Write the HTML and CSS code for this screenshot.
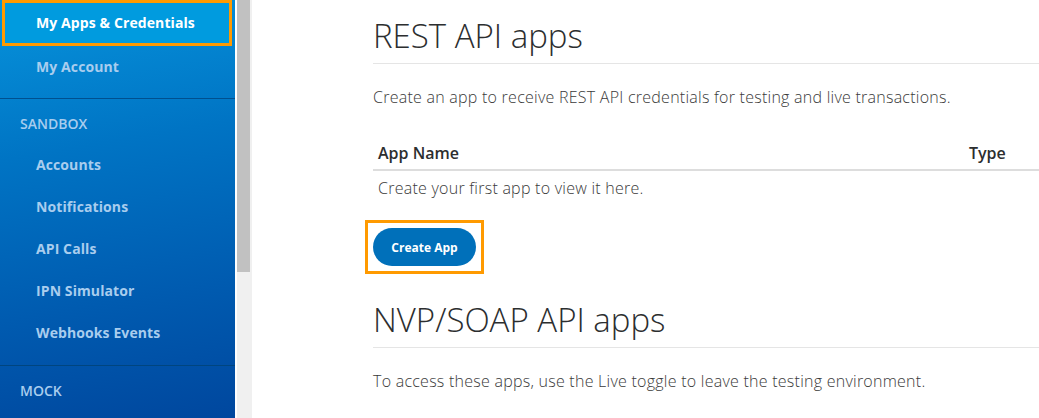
FILE: index.html
```html
<!DOCTYPE html>
<html>
<head>
<meta charset="utf-8">
<link rel="stylesheet" href="styles.css">
</head>
<body>
<div class="page">
  <aside class="sidebar">
    <nav class="nav">
      <a class="item active">My Apps &amp; Credentials</a>
      <a class="item">My Account</a>
    </nav>
    <div class="group">
      <div class="group-title">SANDBOX</div>
      <a class="item">Accounts</a>
      <a class="item">Notifications</a>
      <a class="item">API Calls</a>
      <a class="item">IPN Simulator</a>
      <a class="item">Webhooks Events</a>
    </div>
    <div class="group last">
      <div class="group-title">MOCK</div>
    </div>
  </aside>
  <div class="scrollbar"><div class="thumb"></div></div>
  <main class="main">
    <section class="section">
      <h2 class="title">REST API apps</h2>
      <p class="desc">Create an app to receive REST API credentials for testing and live transactions.</p>
      <table class="apps">
        <thead>
          <tr><th class="name">App Name</th><th class="type">Type</th></tr>
        </thead>
        <tbody>
          <tr><td colspan="2">Create your first app to view it here.</td></tr>
        </tbody>
      </table>
      <div class="highlight"><button class="btn">Create App</button></div>
    </section>
    <section class="section second">
      <h2 class="title">NVP/SOAP API apps</h2>
      <p class="desc">To access these apps, use the Live toggle to leave the testing environment.</p>
    </section>
  </main>
</div>
</body>
</html>
```

FILE: styles.css
```css
html, body {
  margin: 0;
  padding: 0;
  height: 100%;
  overflow: hidden;
  background: #ffffff;
}
body {
  font-family: "Open Sans", "Noto Sans", sans-serif;
}
.page {
  display: flex;
  height: 418px;
  width: 1039px;
  overflow: hidden;
}
.sidebar {
  width: 235px;
  flex: 0 0 235px;
  background: linear-gradient(170deg, #0794dc 0%, #0074c4 35%, #005bb0 70%, #00479e 100%);
  font-size: 14px;
  font-weight: 700;
  font-stretch: 88%;
}
.nav {
  padding-bottom: 10px;
  border-bottom: 1px solid #00508f;
}
.item {
  display: block;
  height: 42px;
  line-height: 42px;
  padding-left: 36px;
  color: #a9cdee;
  text-decoration: none;
  letter-spacing: 0.1px;
}
.item.active {
  height: 40px;
  line-height: 40px;
  margin: 0 3px 0 2px;
  padding-left: 31px;
  border: 3px solid #ff9a00;
  background: #009bdf;
  color: #ffffff;
}
.group {
  padding-bottom: 11px;
  border-bottom: 1px solid #00457f;
}
.group.last {
  border-bottom: 0;
}
.group-title {
  padding: 15px 0 10px 20px;
  line-height: 20px;
  color: #a9cdee;
  font-weight: 600;
  font-size: 14px;
}
.scrollbar {
  flex: 0 0 15px;
  margin-left: 2px;
  background: #f0f0f0;
}
.thumb {
  width: 13px;
  height: 272px;
  background: #c1c1c1;
}
.main {
  flex: 1;
  padding-left: 121px;
  color: #2c2e2f;
}
.section {
  width: 666px;
}
.title {
  margin: 0;
  padding-top: 16px;
  padding-bottom: 7px;
  font-size: 33px;
  line-height: 40px;
  font-weight: 300;
  border-bottom: 1px solid #e5e5e5;
  color: #2c2e2f;
}
.desc {
  margin: 0;
  padding-top: 21px;
  font-size: 16px;
  line-height: 24px;
  font-weight: 300;
  letter-spacing: 0.25px;
  color: #3a3a3a;
}
.apps {
  width: 100%;
  margin-top: 29px;
  border-collapse: collapse;
}
.apps th {
  text-align: left;
  font-size: 16px;
  font-weight: 600;
  padding: 4px 5px 5px;
  line-height: 22px;
  border-bottom: 2px solid #dddddd;
  color: #2c2e2f;
}
.apps th.type {
  width: 65px;
}
.apps td {
  padding: 5px 5px;
  font-size: 16px;
  line-height: 24px;
  font-weight: 300;
  letter-spacing: 0.25px;
  color: #3a3a3a;
}
.highlight {
  display: inline-block;
  margin-top: 15px;
  margin-left: -8px;
  padding: 5px;
  border: 3px solid #ff9a00;
}
.btn {
  display: block;
  width: 103px;
  height: 38px;
  border: 0;
  border-radius: 19px;
  background: #0070ba;
  color: #fff;
  font-family: "Open Sans", "Noto Sans", sans-serif;
  font-size: 12px;
  font-weight: 700;
  padding: 0;
}
.second .title {
  padding-top: 26px;
}
```
